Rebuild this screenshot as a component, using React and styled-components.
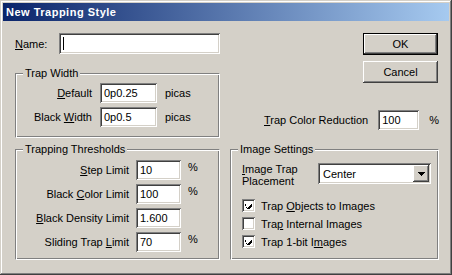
import React from 'react';
import styled, { createGlobalStyle } from 'styled-components';

const GlobalStyle = createGlobalStyle`
  html, body {
    margin: 0;
    padding: 0;
    background: #d4d0c8;
  }
  body {
    font-family: 'Liberation Sans', Arial, sans-serif;
    font-size: 11px;
    color: #000;
  }
`;

const Window = styled.div`
  width: 452px;
  height: 275px;
  box-sizing: border-box;
  padding: 3px;
  background: #d4d0c8;
  box-shadow: inset -1px -1px 0 #404040, inset 1px 1px 0 #d4d0c8,
    inset -2px -2px 0 #808080, inset 2px 2px 0 #ffffff;
  display: flex;
  flex-direction: column;
`;

const TitleBar = styled.div`
  height: 18px;
  background: linear-gradient(to right, #0a246a, #a6caf0);
  display: flex;
  align-items: center;
  padding-left: 3px;
`;

const Title = styled.span`
  color: #fff;
  font-weight: bold;
  font-size: 11px;
  letter-spacing: 0.5px;
`;

const Body = styled.div`
  padding: 12px 10px 0 12px;
  display: flex;
  flex-direction: column;
  gap: 11px;
`;

const Top = styled.div`
  display: grid;
  grid-template-columns: 205px 209px;
  column-gap: 10px;
`;

const Column = styled.div`
  display: flex;
  flex-direction: column;
`;

const NameRow = styled.div`
  display: flex;
  align-items: center;
  height: 21px;
  margin-bottom: 19px;
`;

const Label = styled.span`
  width: ${p => p.$w || 'auto'};
  text-align: ${p => (p.$right ? 'right' : 'left')};
  white-space: nowrap;
  line-height: ${p => p.$lh || 'normal'};
`;

const Key = styled.span`
  text-decoration: underline;
`;

const TextField = styled.div`
  box-sizing: border-box;
  width: ${p => p.$w}px;
  height: ${p => p.$h || 20}px;
  background: #fff;
  padding-left: 4px;
  box-shadow: inset 1px 1px 0 #808080, inset -1px -1px 0 #ffffff,
    inset 2px 2px 0 #404040, inset -2px -2px 0 #d4d0c8;
  white-space: nowrap;
  display: flex;
  align-items: center;
`;

const Caret = styled.span`
  display: inline-block;
  width: 1px;
  height: 13px;
  background: #000;
`;

const Group = styled.div`
  position: relative;
  box-sizing: border-box;
  height: ${p => p.$h}px;
  border: 1px solid #808080;
  border-right-color: #ffffff;
  border-bottom-color: #ffffff;
  box-shadow: inset 1px 1px 0 #ffffff, inset -1px -1px 0 #808080;
  padding: ${p => p.$pad};
`;

const Legend = styled.span`
  position: absolute;
  top: -8px;
  left: 7px;
  padding: 0 2px;
  background: #d4d0c8;
  line-height: 14px;
`;

const FieldGrid = styled.div`
  display: grid;
  grid-template-columns: ${p => p.$cols};
  column-gap: ${p => p.$gap}px;
  row-gap: ${p => p.$rowGap}px;
  align-items: center;
`;

const Unit = styled.span`
  align-self: ${p => (p.$top ? 'start' : 'center')};
  margin-top: ${p => (p.$top ? '1px' : '0')};
`;

const Button = styled.div`
  box-sizing: border-box;
  width: 75px;
  height: 22px;
  display: flex;
  align-items: center;
  justify-content: center;
  align-self: flex-end;
  margin-right: 1px;
  background: #d4d0c8;
  border: ${p => (p.$default ? '1px solid #000' : 'none')};
  box-shadow: inset -1px -1px 0 #404040, inset 1px 1px 0 #ffffff,
    inset -2px -2px 0 #808080;
  margin-bottom: ${p => p.$mb || 0}px;
`;

const ReductionRow = styled.div`
  display: flex;
  align-items: center;
  gap: 10px;
  margin-left: 34px;
`;

const SelectRow = styled.div`
  display: flex;
  align-items: flex-start;
  justify-content: space-between;
  margin-bottom: 12px;
`;

const Select = styled.div`
  box-sizing: border-box;
  width: 113px;
  height: 21px;
  background: #fff;
  display: flex;
  align-items: center;
  justify-content: space-between;
  padding: 2px 2px 2px 5px;
  box-shadow: inset 1px 1px 0 #808080, inset -1px -1px 0 #ffffff,
    inset 2px 2px 0 #404040, inset -2px -2px 0 #d4d0c8;
`;

const DropButton = styled.div`
  width: 16px;
  height: 17px;
  background: #d4d0c8;
  box-shadow: inset -1px -1px 0 #404040, inset 1px 1px 0 #ffffff,
    inset -2px -2px 0 #808080;
  display: flex;
  align-items: center;
  justify-content: center;
`;

const CheckList = styled.div`
  display: flex;
  flex-direction: column;
  gap: 5px;
`;

const CheckRow = styled.div`
  display: flex;
  align-items: center;
  gap: 6px;
`;

const Box = styled.div`
  width: 13px;
  height: 13px;
  box-sizing: border-box;
  background: #fff;
  box-shadow: inset 1px 1px 0 #808080, inset -1px -1px 0 #ffffff,
    inset 2px 2px 0 #404040, inset -2px -2px 0 #d4d0c8;
  display: flex;
  align-items: center;
  justify-content: center;
`;

const Check = () => (
  <svg width="7" height="7" viewBox="0 0 7 7" shapeRendering="crispEdges">
    <path d="M0 2h1v3h1v1h1v-1h1v-1h1v-1h1v-1h1v3h-1v1h-1v1h-1v1h-1v-1h-1v-1h-1z" fill="#000" />
  </svg>
);

const Arrow = () => (
  <svg width="7" height="4" viewBox="0 0 7 4" shapeRendering="crispEdges">
    <path d="M0 0h7v1h-1v1h-1v1h-1v1h-1v-1h-1v-1h-1v-1h-1z" fill="#000" />
  </svg>
);

const Checkbox = ({ checked, children }) => (
  <CheckRow>
    <Box>{checked && <Check />}</Box>
    <span>{children}</span>
  </CheckRow>
);

export default function App() {
  return (
    <>
      <GlobalStyle />
      <Window>
        <TitleBar>
          <Title>New Trapping Style</Title>
        </TitleBar>
        <Body>
          <Top>
            <Column>
              <NameRow>
                <Label $w="44px">
                  <Key>N</Key>ame:
                </Label>
                <TextField $w={161} $h={21}>
                  <Caret />
                </TextField>
              </NameRow>
              <Group $h={65} $pad="9px 0 0 0">
                <Legend>Trap Width</Legend>
                <FieldGrid $cols="76px 57px auto" $gap={8} $rowGap={4}>
                  <Label $right>
                    <Key>D</Key>efault
                  </Label>
                  <TextField $w={57}>0p0.25</TextField>
                  <Unit>picas</Unit>
                  <Label $right>
                    Black <Key>W</Key>idth
                  </Label>
                  <TextField $w={57}>0p0.5</TextField>
                  <Unit>picas</Unit>
                </FieldGrid>
              </Group>
            </Column>
            <Column>
              <Button $default $mb={6}>OK</Button>
              <Button $mb={27}>Cancel</Button>
              <ReductionRow>
                <Label>
                  <Key>T</Key>rap Color Reduction
                </Label>
                <TextField $w={45}>100</TextField>
                <Unit>%</Unit>
              </ReductionRow>
            </Column>
          </Top>
          <Top>
            <Group $h={111} $pad="10px 0 0 0">
              <Legend>Trapping Thresholds</Legend>
              <FieldGrid $cols="113px 45px auto" $gap={7} $rowGap={4}>
                <Label $right>
                  <Key>S</Key>tep Limit
                </Label>
                <TextField $w={45}>10</TextField>
                <Unit $top>%</Unit>
                <Label $right>
                  Black <Key>C</Key>olor Limit
                </Label>
                <TextField $w={45}>100</TextField>
                <Unit $top>%</Unit>
                <Label $right>
                  <Key>B</Key>lack Density Limit
                </Label>
                <TextField $w={45}>1.600</TextField>
                <span />
                <Label $right>
                  Sliding Trap <Key>L</Key>imit
                </Label>
                <TextField $w={45}>70</TextField>
                <Unit $top>%</Unit>
              </FieldGrid>
            </Group>
            <Group $h={111} $pad="13px 7px 0 11px">
              <Legend>Image Settings</Legend>
              <SelectRow>
                <Label $lh="12px">
                  <Key>I</Key>mage Trap
                  <br />
                  Placement
                </Label>
                <Select>
                  <span>Center</span>
                  <DropButton>
                    <Arrow />
                  </DropButton>
                </Select>
              </SelectRow>
              <CheckList>
                <Checkbox checked>
                  Trap <Key>O</Key>bjects to Images
                </Checkbox>
                <Checkbox>
                  Tra<Key>p</Key> Internal Images
                </Checkbox>
                <Checkbox checked>
                  Trap 1-bit I<Key>m</Key>ages
                </Checkbox>
              </CheckList>
            </Group>
          </Top>
        </Body>
      </Window>
    </>
  );
}
